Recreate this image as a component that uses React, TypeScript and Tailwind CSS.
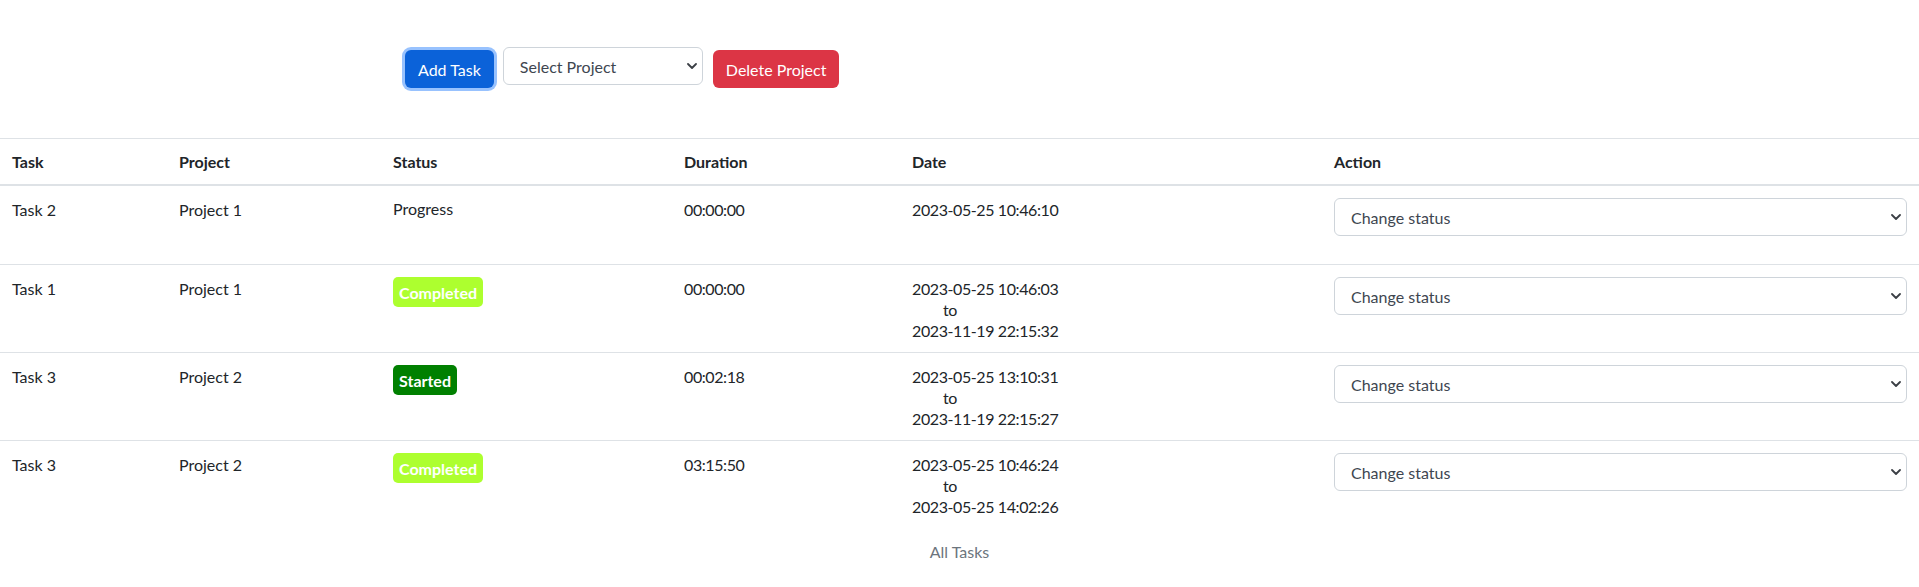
import React from "react";

type Row = {
  task: string;
  project: string;
  status: "Progress" | "Completed" | "Started";
  duration: string;
  from: string;
  to?: string;
};

const rows: Row[] = [
  { task: "Task 2", project: "Project 1", status: "Progress", duration: "00:00:00", from: "2023-05-25 10:46:10" },
  { task: "Task 1", project: "Project 1", status: "Completed", duration: "00:00:00", from: "2023-05-25 10:46:03", to: "2023-11-19 22:15:32" },
  { task: "Task 3", project: "Project 2", status: "Started", duration: "00:02:18", from: "2023-05-25 13:10:31", to: "2023-11-19 22:15:27" },
  { task: "Task 3", project: "Project 2", status: "Completed", duration: "03:15:50", from: "2023-05-25 10:46:24", to: "2023-05-25 14:02:26" },
];

function Chevron({ className }: { className?: string }) {
  return (
    <svg
      className={className}
      width="10"
      height="6"
      viewBox="0 0 10 6"
      fill="none"
      stroke="#3b3f45"
      strokeWidth="1.8"
      strokeLinecap="round"
      strokeLinejoin="round"
    >
      <path d="M1 1 L5 5 L9 1" />
    </svg>
  );
}

function SelectBox({ label, className }: { label: string; className?: string }) {
  return (
    <div className={"relative " + (className ?? "")}>
      <select className="w-full h-[38px] appearance-none bg-white border border-[#ced4da] rounded-[6px] pl-[16px] pr-[30px] text-[16px] leading-[21px] text-[#3e4650] outline-none">
        <option>{label}</option>
      </select>
      <Chevron className="pointer-events-none absolute right-[6px] top-1/2 -translate-y-1/2" />
    </div>
  );
}

function StatusCell({ status }: { status: Row["status"] }) {
  if (status === "Progress") return <span>Progress</span>;
  const bg = status === "Completed" ? "bg-[#adff2f]" : "bg-[#008000]";
  return (
    <span className={"inline-flex items-center h-[30px] px-[6px] rounded-[5px] font-bold text-white " + bg}>
      {status}
    </span>
  );
}

export default function App() {
  return (
    <div
      className="min-h-[587px] bg-white text-[#212529] text-[16px] leading-[21px]"
      style={{ fontFamily: "Lato, 'Segoe UI', 'Noto Sans', sans-serif" }}
    >
      <div className="flex items-start pl-[405px] pt-[47px] h-[91px]">
        <button className="mt-[3px] h-[38px] px-[13px] rounded-[6px] bg-[#0b62d9] text-white text-[16px] ring-[3px] ring-[#98c2fe]">
          Add Task
        </button>
        <SelectBox label="Select Project" className="ml-[9px] w-[200px]" />
        <button className="ml-[10px] mt-[3px] h-[38px] px-[13px] rounded-[6px] bg-[#dc3545] text-white text-[16px]">
          Delete Project
        </button>
      </div>

      <table className="mt-[47px] w-full table-fixed border-collapse border-t border-[#dee2e6]">
        <colgroup>
          <col className="w-[167px]" />
          <col className="w-[214px]" />
          <col className="w-[291px]" />
          <col className="w-[228px]" />
          <col className="w-[422px]" />
          <col />
        </colgroup>
        <thead>
          <tr className="border-b-2 border-[#dee2e6]">
            {["Task", "Project", "Status", "Duration", "Date", "Action"].map((h) => (
              <th key={h} className="text-left font-bold px-[12px] py-[12px] align-top">
                {h}
              </th>
            ))}
          </tr>
        </thead>
        <tbody>
          {rows.map((r, i) => (
            <tr key={i} className={i < rows.length - 1 ? "border-b border-[#dee2e6]" : ""}>
              <td className="px-[12px] pt-[13px] pb-[11px] align-top">{r.task}</td>
              <td className="px-[12px] pt-[13px] pb-[11px] align-top">{r.project}</td>
              <td className="px-[12px] py-[12px] align-top">
                <StatusCell status={r.status} />
              </td>
              <td className="px-[12px] pt-[13px] pb-[11px] align-top tracking-[-0.4px]">{r.duration}</td>
              <td className="px-[12px] pt-[13px] pb-[11px] align-top tracking-[-0.4px]">
                <div>{r.from}</div>
                {r.to && (
                  <>
                    <div className="pl-[31px]">to</div>
                    <div>{r.to}</div>
                  </>
                )}
              </td>
              <td className="px-[12px] py-[12px] align-top">
                <SelectBox label="Change status" className="mb-[16px]" />
              </td>
            </tr>
          ))}
        </tbody>
      </table>
      <div className="text-center text-[#6c757d] pt-[13px]">All Tasks</div>
    </div>
  );
}
